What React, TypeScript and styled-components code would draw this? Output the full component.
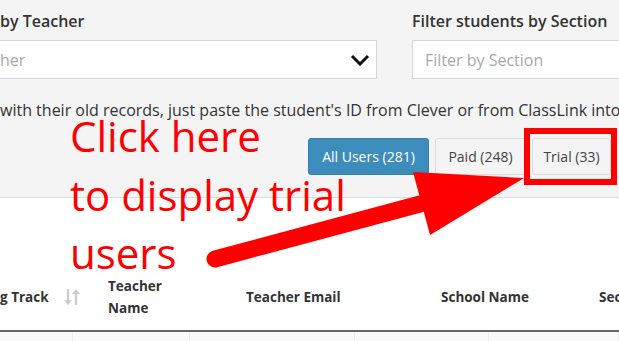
import styled, { createGlobalStyle } from "styled-components";

const GlobalStyle = createGlobalStyle`
  html, body {
    margin: 0;
    padding: 0;
    background: #ffffff;
    overflow: hidden;
  }
  body {
    font-family: "Open Sans", "Liberation Sans", sans-serif;
    color: #333333;
  }
`;

const Page = styled.div`
  position: relative;
  width: 619px;
  height: 341px;
  overflow: hidden;
`;

const FilterPanel = styled.section`
  height: 198px;
  background: #f4f4f4;
  border-bottom: 1px solid #dddddd;
  box-sizing: border-box;
  padding-top: 10px;
`;

const FilterRow = styled.div`
  display: grid;
  grid-template-columns: 377px 240px;
  column-gap: 35px;
`;

const Field = styled.div`
  display: flex;
  flex-direction: column;
  gap: 8px;
`;

const Label = styled.label`
  font-size: 16px;
  font-weight: 600;
  line-height: 22px;
  color: #333333;
  white-space: nowrap;
`;

const Select = styled.div<{ $open?: boolean }>`
  display: flex;
  align-items: center;
  justify-content: space-between;
  height: 39px;
  box-sizing: border-box;
  background: #ffffff;
  border: 1px solid #d2d6de;
  border-left: ${({ $open }) => ($open ? "none" : "1px solid #d2d6de")};
  padding: 0 6px 0 ${({ $open }) => ($open ? "0" : "12px")};
`;

const Placeholder = styled.span`
  font-size: 16px;
  color: #a9a9a9;
  white-space: nowrap;
`;

const Notice = styled.p`
  margin: 20px 0 0;
  font-size: 16px;
  font-weight: 500;
  line-height: 22px;
  white-space: nowrap;
  overflow: hidden;
  color: #333333;
`;

const ButtonGroup = styled.div`
  display: flex;
  justify-content: flex-end;
  gap: 6px;
  margin-top: 17px;
  padding-right: 8px;
`;

const FilterButton = styled.button<{ $active?: boolean; $width: number }>`
  width: ${({ $width }) => $width}px;
  height: 37px;
  padding: 0;
  border-radius: 3px;
  font-family: inherit;
  font-size: 14px;
  border: 1px solid ${({ $active }) => ($active ? "#367fa9" : "#dddddd")};
  background: ${({ $active }) => ($active ? "#3c8dbc" : "#f4f4f4")};
  color: ${({ $active }) => ($active ? "#ffffff" : "#444444")};
  cursor: pointer;
`;

const TableHead = styled.div`
  display: grid;
  grid-template-columns: 100px 138px 195px 158px 1fr;
  align-items: center;
  margin-top: 66px;
  height: 68px;
  border-bottom: 2px solid #666666;
  box-sizing: border-box;
`;

const HeadCell = styled.div<{ $pad?: number }>`
  display: flex;
  align-items: center;
  gap: 15px;
  padding-left: ${({ $pad }) => ($pad ?? 8)}px;
  font-size: 13.5px;
  font-weight: 700;
  line-height: 22px;
  color: #333333;
  white-space: nowrap;
`;

const BodyRow = styled.div`
  display: grid;
  grid-template-columns: 73px 117px 165px 134px 1fr;
  height: 30px;
  background: #f9f9f9;
`;

const BodyCell = styled.div`
  border-right: 1px solid #ececec;
`;

const Annotation = styled.svg`
  position: absolute;
  left: 0;
  top: 0;
  pointer-events: none;
`;

const Callout = styled.div`
  position: absolute;
  left: 70px;
  top: 107px;
  font-family: "Open Sans", sans-serif;
  font-size: 42px;
  line-height: 58.5px;
  color: #ff0000;
  white-space: nowrap;
  pointer-events: none;
`;

function SortIcon() {
  return (
    <svg width="16" height="18" viewBox="0 0 16 18">
      <g fill="none" stroke="#cccccc" strokeWidth="2.4">
        <path d="M4 1v14" />
        <path d="M12 3v14" />
      </g>
      <g fill="#cccccc">
        <path d="M0 12h8l-4 5z" />
        <path d="M8 6h8l-4-5z" />
      </g>
    </svg>
  );
}

function Chevron() {
  return (
    <svg width="20" height="12" viewBox="0 0 20 12">
      <path d="M2 2l8 8 8-8" fill="none" stroke="#111111" strokeWidth="3" />
    </svg>
  );
}

export default function App() {
  return (
    <>
      <GlobalStyle />
      <Page>
        <FilterPanel>
          <FilterRow>
            <Field>
              <Label>by Teacher</Label>
              <Select $open>
                <Placeholder>her</Placeholder>
                <Chevron />
              </Select>
            </Field>
            <Field>
              <Label>Filter students by Section</Label>
              <Select>
                <Placeholder>Filter by Section</Placeholder>
              </Select>
            </Field>
          </FilterRow>
          <Notice>
            with their old records, just paste the student's ID from Clever or
            from ClassLink into the search box
          </Notice>
          <ButtonGroup>
            <FilterButton $active $width={121}>
              All Users (281)
            </FilterButton>
            <FilterButton $width={91}>Paid (248)</FilterButton>
            <FilterButton $width={79}>Trial (33)</FilterButton>
          </ButtonGroup>
        </FilterPanel>

        <TableHead>
          <HeadCell $pad={0}>
            g Track
            <SortIcon />
          </HeadCell>
          <HeadCell>
            Teacher
            <br />
            Name
          </HeadCell>
          <HeadCell>Teacher Email</HeadCell>
          <HeadCell>School Name</HeadCell>
          <HeadCell>Section</HeadCell>
        </TableHead>
        <BodyRow>
          <BodyCell />
          <BodyCell />
          <BodyCell />
          <BodyCell />
          <BodyCell />
        </BodyRow>

        <Callout>
          Click here
          <br />
          to display trial
          <br />
          users
        </Callout>
        <Annotation width="619" height="341" viewBox="0 0 619 341">
          <path
            d="M215 259L420 204"
            stroke="#ff0000"
            strokeWidth="17"
            strokeLinecap="round"
          />
          <path d="M413 172L524 178L430 235z" fill="#ff0000" />
          <rect
            x="527"
            y="131"
            width="87"
            height="51"
            fill="none"
            stroke="#ff0000"
            strokeWidth="6"
          />
        </Annotation>
      </Page>
    </>
  );
}
